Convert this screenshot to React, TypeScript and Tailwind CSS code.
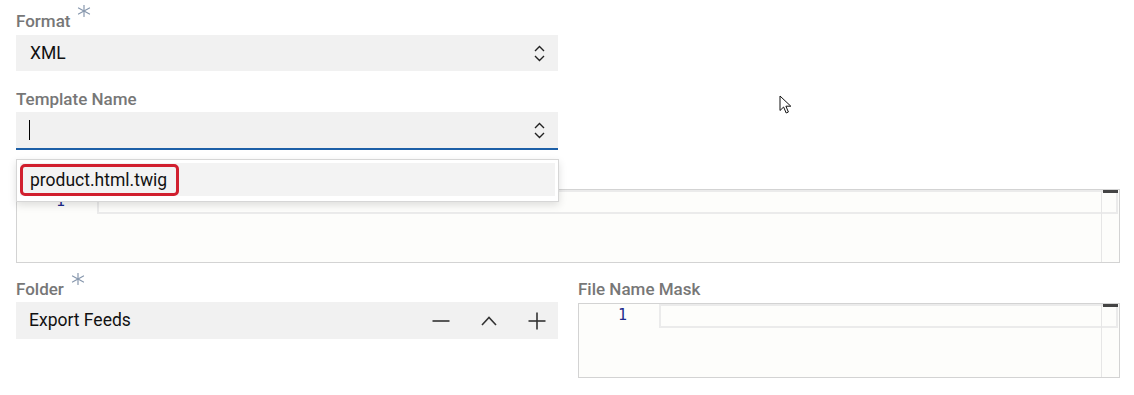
import React from 'react';

const Asterisk = () => (
  <svg width="14" height="12" viewBox="0 0 14 12" className="ml-[7px] -mt-[6px] shrink-0">
    <g stroke="#8797ad" strokeWidth="1.2" strokeLinecap="round">
      <line x1="7" y1="0.5" x2="7" y2="11.5" />
      <line x1="1.5" y1="3" x2="12.5" y2="9" />
      <line x1="1.5" y1="9" x2="12.5" y2="3" />
    </g>
  </svg>
);

const Label = ({ text, required, className = '' }: { text: string; required?: boolean; className?: string }) => (
  <div className={`flex items-start h-[20px] leading-[20px] text-[17px] font-medium text-[#777] ${className}`}>
    <span>{text}</span>
    {required && <Asterisk />}
  </div>
);

const UpDown = () => (
  <svg width="11" height="17" viewBox="0 0 11 17" fill="none" stroke="#222" strokeWidth="1.4">
    <path d="M1 6 L5.5 1.5 L10 6" />
    <path d="M1 11 L5.5 15.5 L10 11" />
  </svg>
);

const CodeEditor = ({ height }: { height: string }) => (
  <div className={`relative flex bg-[#fdfdfb] border border-[#d3d3d3] ${height}`}>
    <div className="w-[80px] shrink-0 pr-[32px] text-right font-['DejaVu_Sans_Mono',monospace] text-[15px] leading-[22px] text-[#1f2b8c]">
      1
    </div>
    <div className="flex-1 pr-[1px]">
      <div className="h-[24px] border-2 border-[#ebebeb]" />
    </div>
    <div className="absolute right-0 top-0 bottom-0 w-[18px] border-l border-[#e6e6e6]">
      <div className="h-[3px] bg-[#444] ml-[1px] mr-[1px]" />
    </div>
  </div>
);

const Minus = () => (
  <svg width="18" height="18" viewBox="0 0 18 18" stroke="#333" strokeWidth="1.6">
    <line x1="0.5" y1="9" x2="17.5" y2="9" />
  </svg>
);

const ChevronUp = () => (
  <svg width="18" height="18" viewBox="0 0 18 18" fill="none" stroke="#333" strokeWidth="1.6">
    <path d="M2 13 L9 5.5 L16 13" />
  </svg>
);

const Plus = () => (
  <svg width="18" height="18" viewBox="0 0 18 18" stroke="#333" strokeWidth="1.6">
    <line x1="0.5" y1="9" x2="17.5" y2="9" />
    <line x1="9" y1="0.5" x2="9" y2="17.5" />
  </svg>
);

const Pointer = () => (
  <svg width="14" height="20" viewBox="0 0 14 20" className="absolute left-[779px] top-[95px]">
    <path
      d="M1 1 L1 15.5 L4.6 12 L7.2 18 L9.4 17 L6.9 11.2 L11.8 11.2 Z"
      fill="#fff"
      stroke="#111"
      strokeWidth="1"
      strokeLinejoin="round"
    />
  </svg>
);

export default function App() {
  return (
    <div className="relative w-[1134px] h-[395px] overflow-hidden bg-white pl-4 pr-[14px] pt-[11px] font-['Roboto',sans-serif]">
      <div className="w-[542px]">
        <Label text="Format" required className="mb-[4px]" />
        <div className="flex items-center justify-between h-[36px] bg-[#f1f1f1] pl-[14px] pr-[13px]">
          <span className="text-[17.5px] text-[#111]">XML</span>
          <UpDown />
        </div>

        <Label text="Template Name" className="mt-[18px] mb-[3px]" />
        <div className="relative">
          <div className="flex items-center justify-between h-[38px] bg-[#f1f1f1] border-b-2 border-[#1d5fa7] pl-[13px] pr-[13px]">
            <span className="w-[1px] h-[20px] bg-black" />
            <UpDown />
          </div>
          <div className="absolute z-10 left-0 top-[47px] w-[543px] bg-white border border-[#d6d6d6] shadow-[0_3px_8px_rgba(0,0,0,0.13)] px-[3px] pt-[3px] pb-[5px]">
            <div className="flex items-center h-[33px] bg-[#f3f3f3]">
              <span className="h-[32px] leading-[26px] border-[3px] border-[#d11f2e] rounded-[5px] pl-[7px] pr-[9px] text-[17.5px] text-[#111]">
                product.html.twig
              </span>
            </div>
          </div>
        </div>
      </div>

      <div className="h-[20px] mt-[18px] mb-[1px]" />
      <CodeEditor height="h-[74px]" />

      <div className="grid grid-cols-2 gap-x-[20px] mt-[16px]">
        <div>
          <Label text="Folder" required className="mb-[3px]" />
          <div className="flex items-center justify-between h-[37px] bg-[#f1f1f1] pl-[13px] pr-[12px]">
            <span className="text-[17.5px] text-[#111]">Export Feeds</span>
            <div className="flex items-center gap-[30px]">
              <Minus />
              <ChevronUp />
              <Plus />
            </div>
          </div>
        </div>
        <div>
          <Label text="File Name Mask" className="mb-[4px]" />
          <CodeEditor height="h-[75px]" />
        </div>
      </div>

      <Pointer />
    </div>
  );
}
